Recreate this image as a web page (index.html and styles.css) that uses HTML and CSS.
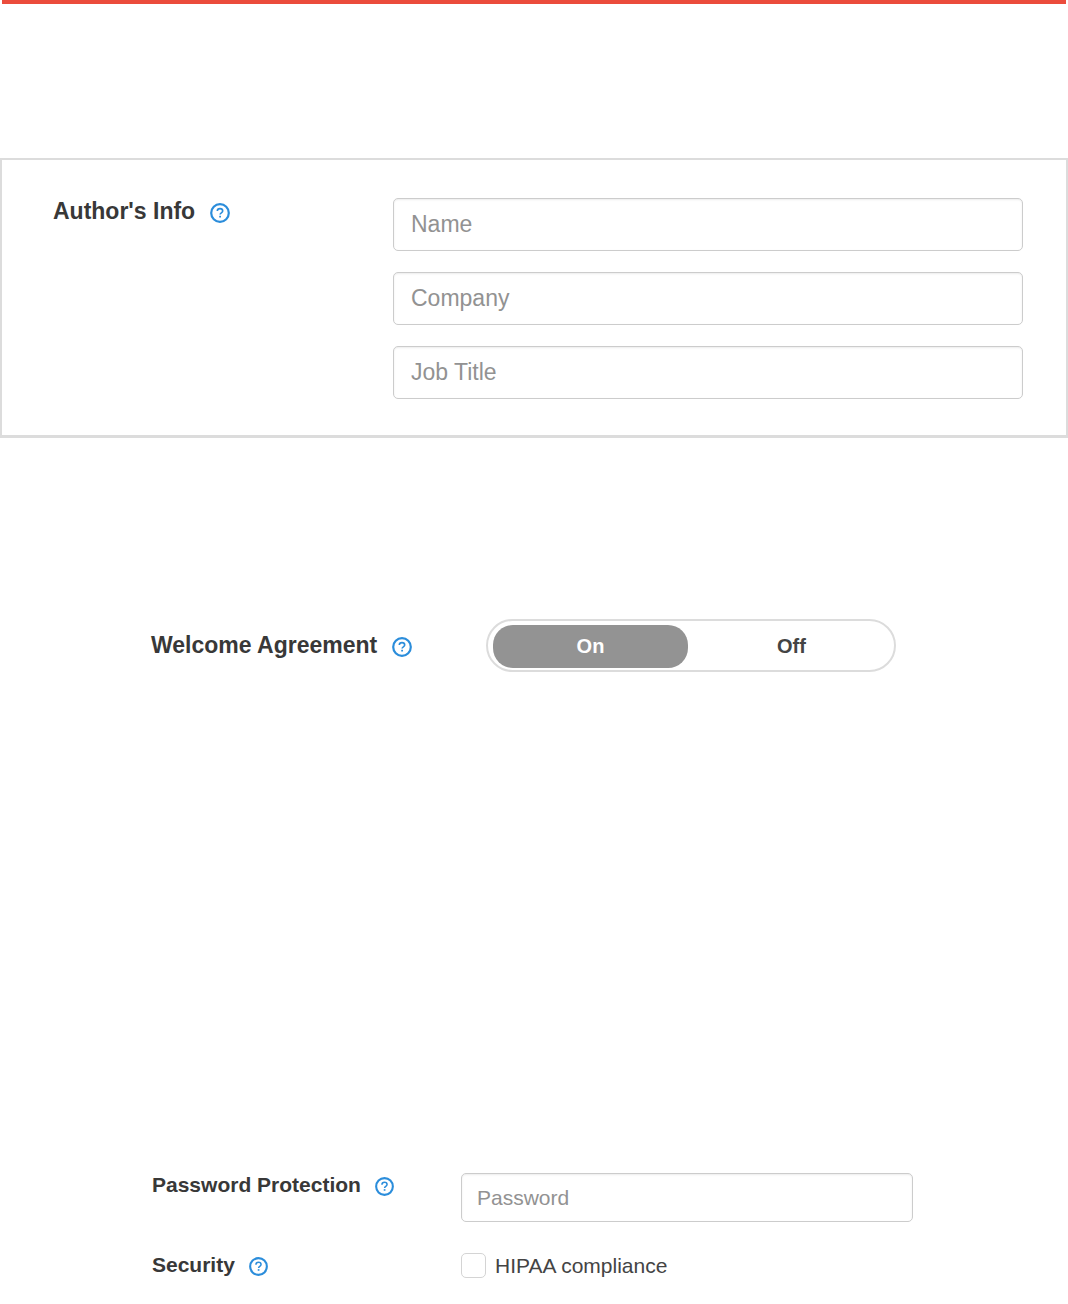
FILE: index.html
```html
<!DOCTYPE html>
<html lang="en">
<head>
    <meta charset="utf-8">
    <title>Settings</title>
    <link rel="stylesheet" href="styles.css">
</head>
<body>
    <svg class="sprite" aria-hidden="true">
        <symbol id="help" viewBox="0 0 20 20">
            <circle cx="10" cy="10" r="8.8" fill="none" stroke="currentColor" stroke-width="2.2"/>
            <path d="M7.3 8.1C7.3 6.5 8.4 5.6 10 5.6s2.7 .9 2.7 2.3c0 1.9-2.6 1.9-2.6 3.7" fill="none" stroke="currentColor" stroke-width="1.6"/>
            <rect x="9.2" y="12.8" width="1.8" height="1.7" fill="currentColor"/>
        </symbol>
    </svg>

    <div class="topbar"></div>

    <form>
        <div class="panel author">
            <div class="title">
                <label for="name">Author's Info</label>
                <button type="button" class="help" aria-label="Help"><svg><use href="#help"/></svg></button>
            </div>
            <div class="fields">
                <input class="text" type="text" id="name" placeholder="Name">
                <input class="text" type="text" id="company" placeholder="Company" aria-label="Company">
                <input class="text" type="text" id="jobTitle" placeholder="Job Title" aria-label="Job Title">
            </div>
        </div>

        <div class="agreement">
            <div class="title">
                <span id="agreementTitle">Welcome Agreement</span>
                <button type="button" class="help" aria-label="Help"><svg><use href="#help"/></svg></button>
            </div>
            <div class="switch" role="radiogroup" aria-labelledby="agreementTitle">
                <div class="option">
                    <input type="radio" name="agreement" id="on" value="1" checked>
                    <label for="on">On</label>
                </div>
                <div class="option">
                    <input type="radio" name="agreement" id="off" value="0">
                    <label for="off">Off</label>
                </div>
            </div>
        </div>

        <div class="security">
            <div class="title">
                <label for="password">Password Protection</label>
                <button type="button" class="help" aria-label="Help"><svg><use href="#help"/></svg></button>
            </div>
            <input class="text" type="password" id="password" placeholder="Password">
            <div class="title">
                <span>Security</span>
                <button type="button" class="help" aria-label="Help"><svg><use href="#help"/></svg></button>
            </div>
            <div class="check">
                <input type="checkbox" id="hipaa">
                <label for="hipaa">HIPAA compliance</label>
            </div>
        </div>
    </form>
</body>
</html>
```

FILE: styles.css
```css
* {
    box-sizing: border-box;
}

body {
    margin: 0;
    background: #fff;
    color: #383838;
    font-family: "Liberation Sans", Arial, sans-serif;
    font-size: 23px;
}

input, button {
    margin: 0;
    font-family: inherit;
}

.sprite {
    display: none;
}

.topbar {
    height: 4px;
    margin: 0 2px;
    background: #eb4c3c;
}

.title {
    display: flex;
    align-items: center;
    gap: 15px;
    height: 26px;
    font-weight: bold;
    white-space: nowrap;
}

.help {
    width: 20px;
    height: 20px;
    margin-top: 3px;
    padding: 0;
    border: 0;
    background: none;
    color: #2b8ddb;
    cursor: pointer;
}

.help svg {
    display: block;
    width: 100%;
    height: 100%;
}

.text {
    width: 100%;
    height: 53px;
    padding: 0 17px;
    border: 1px solid #ccc;
    border-radius: 5px;
    background: #fff;
    box-shadow: inset 0 1px 2px rgba(0, 0, 0, .08);
    color: #383838;
    font-size: 23px;
}

.text::placeholder {
    color: #929292;
}

.panel {
    margin-top: 154px;
    padding: 38px 43px 36px 51px;
    border: 2px solid #dcdcdc;
    border-bottom-width: 3px;
}

.author {
    display: grid;
    grid-template-columns: 340px 1fr;
}

.fields {
    display: grid;
    gap: 21px;
}

.agreement {
    display: grid;
    grid-template-columns: 335px 410px;
    align-items: center;
    margin-top: 181px;
    padding-left: 151px;
}

.agreement .title {
    height: 27px;
}

.switch {
    display: grid;
    grid-template-columns: 1fr 1fr;
    gap: 6px;
    padding: 4px 5px 2px;
    border: 2px solid #dcdcdc;
    border-radius: 27px;
}

.option {
    position: relative;
}

.option input {
    position: absolute;
    inset: 0;
    width: 100%;
    height: 100%;
    opacity: 0;
    cursor: pointer;
}

.option label {
    display: block;
    border-radius: 20px;
    color: #444;
    font-size: 20px;
    font-weight: bold;
    line-height: 43px;
    text-align: center;
}

.option input:checked + label {
    background: #939393;
    color: #fff;
}

.security {
    display: grid;
    grid-template-columns: 309px 1fr;
    row-gap: 31px;
    margin-top: 501px;
    padding: 0 155px 25px 152px;
    font-size: 21px;
}

.security .title {
    gap: 14px;
    height: 23px;
}

.security .help {
    width: 19px;
    height: 19px;
}

.security .text {
    height: 49px;
    padding: 0 15px;
    font-size: 21px;
}

.check {
    display: flex;
    align-items: center;
    gap: 9px;
    color: #444;
}

.check input {
    appearance: none;
    width: 25px;
    height: 25px;
    border: 1px solid #d4d4d4;
    border-radius: 5px;
    background: #fff;
}

.check input:checked {
    background: #2b8ddb;
}
```
